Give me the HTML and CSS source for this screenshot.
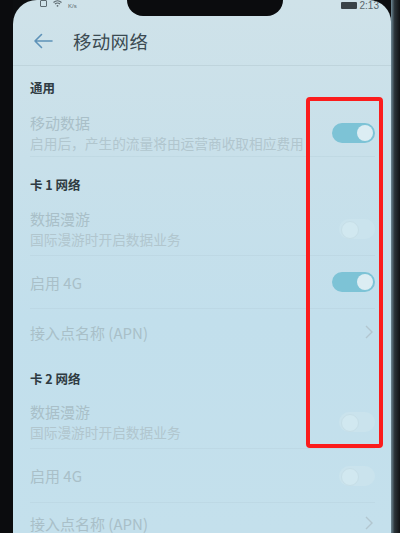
FILE: index.html
```html
<!DOCTYPE html>
<html lang="zh-CN">
<head>
<meta charset="utf-8">
<link rel="stylesheet" href="styles.css">
</head>
<body>
<div class="device">
  <div class="bezel-left"></div>
  <div class="screen">
    <div class="notch"></div>
    <div class="status">
      <div class="status-left">
        <span class="sim"></span>
        <svg class="wifi" width="9" height="7" viewBox="0 0 9 7"><path d="M0.5 2.5 Q4.5 -1 8.5 2.5 M2 4 Q4.5 2 7 4" stroke="#5d6a70" stroke-width="1.2" fill="none"/><circle cx="4.5" cy="5.8" r="0.9" fill="#5d6a70"/></svg>
        <span class="kps">K/s</span>
      </div>
      <div class="status-right">
        <span class="battery"></span>
        <span class="time">2:13</span>
      </div>
    </div>
    <div class="header">
      <svg class="back" width="20" height="16" viewBox="0 0 20 16"><path d="M19 8 H2 M8.5 1.5 L2 8 L8.5 14.5" stroke="#5e92b8" stroke-width="1.6" fill="none" stroke-linecap="round" stroke-linejoin="round"/></svg>
      <span class="title">移动网络</span>
    </div>
    <div class="divider-top"></div>

    <div class="section s1">通用</div>
    <div class="row r1 line">
      <div class="texts">
        <div class="t">移动数据</div>
        <div class="sub">启用后，产生的流量将由运营商收取相应费用</div>
      </div>
      <span class="toggle on"></span>
    </div>

    <div class="section s2">卡 1 网络</div>
    <div class="row r2 line">
      <div class="texts">
        <div class="t">数据漫游</div>
        <div class="sub">国际漫游时开启数据业务</div>
      </div>
      <span class="toggle off"></span>
    </div>
    <div class="row r3 line">
      <div class="texts"><div class="t">启用 4G</div></div>
      <span class="toggle on"></span>
    </div>
    <div class="row r4">
      <div class="texts"><div class="t">接入点名称 (APN)</div></div>
      <svg class="chev" width="8" height="14" viewBox="0 0 8 14"><path d="M1 1 L7 7 L1 13" stroke="#b2c6cf" stroke-width="1.4" fill="none"/></svg>
    </div>

    <div class="section s3">卡 2 网络</div>
    <div class="row r5 line">
      <div class="texts">
        <div class="t">数据漫游</div>
        <div class="sub">国际漫游时开启数据业务</div>
      </div>
      <span class="toggle off"></span>
    </div>
    <div class="row r6 line">
      <div class="texts"><div class="t">启用 4G</div></div>
      <span class="toggle off"></span>
    </div>
    <div class="row r7">
      <div class="texts"><div class="t">接入点名称 (APN)</div></div>
      <svg class="chev" width="8" height="14" viewBox="0 0 8 14"><path d="M1 1 L7 7 L1 13" stroke="#b2c6cf" stroke-width="1.4" fill="none"/></svg>
    </div>

    <div class="highlight"></div>
  </div>
  <div class="bezel-right"></div>
</div>
</body>
</html>
```
FILE: styles.css
```css
* { box-sizing: border-box; }
html, body { margin: 0; padding: 0; }
body {
  width: 400px;
  height: 533px;
  overflow: hidden;
  background: #0c0e10;
  font-family: "Noto Sans CJK SC", "Noto Sans", sans-serif;
}
.device {
  display: flex;
  height: 533px;
}
.bezel-left { width: 13px; background: #0b0c0e; }
.bezel-right {
  width: 9px;
  background: linear-gradient(90deg, #6d8895 0%, #2a3338 40%, #101214 100%);
}
.screen {
  position: relative;
  flex: 1;
  overflow: hidden;
  border-radius: 24px 22px 0 0;
  background: linear-gradient(180deg, #cfe2e9 0%, #c8e0ea 30%, #c2dfec 60%, #c4e0ec 100%);
  padding-left: 17px;
  padding-right: 16px;
}
.notch {
  position: absolute;
  left: 114px;
  top: -10px;
  width: 156px;
  height: 26px;
  background: #0b0c0e;
  border-radius: 0 0 16px 16px;
}
.status {
  height: 17px;
  display: flex;
  justify-content: space-between;
  align-items: flex-start;
  padding: 0 0 0 10px;
}
.status-left, .status-right { display: flex; align-items: center; gap: 6px; margin-top: -2px; }
.sim { width: 7px; height: 7px; border: 1.3px solid #5d6a70; border-radius: 1px; }
.kps { font-size: 6px; color: #5d6a70; font-family: "Liberation Sans", sans-serif; margin-top: 5px; }
.status-right { margin-right: -4px; gap: 3px; margin-top: 0; }
.battery { width: 16px; height: 7px; background: #3a4348; border-radius: 1px; }
.time { font-size: 10px; line-height: 11px; color: #5a666c; font-family: "Liberation Sans", sans-serif; }
.header {
  height: 48px;
  display: flex;
  align-items: center;
  padding-bottom: 1px;
}
.back { margin-left: 3px; margin-right: 20px; }
.title { font-size: 18.5px; color: #3b4a52; letter-spacing: 0.3px; }
.divider-top { height: 1px; margin: 0 -17px 0 -17px; background: #bfd4dc; }
.section {
  font-size: 12.5px;
  font-weight: bold;
  color: #2f3b42;
  line-height: 17px;
}
.s1 { height: 44px; padding-top: 13px; }
.s2 { height: 46px; padding-top: 19px; }
.s3 { height: 41px; padding-top: 15px; }
.row {
  display: flex;
  align-items: center;
  justify-content: space-between;
}
.line { border-bottom: 1px solid rgba(176, 202, 212, 0.3); }
.r1 { height: 47px; }
.r2 { height: 53px; }
.r3 { height: 53px; }
.r4 { height: 46px; }
.r5 { height: 53px; }
.r6 { height: 54px; }
.r7 { height: 40px; }
.texts { display: flex; flex-direction: column; gap: 2px; }
.t { font-size: 15px; color: #a9bfc8; line-height: 19px; }
.sub { font-size: 13.7px; color: #b1c6ce; line-height: 19px; white-space: nowrap; }
.toggle {
  position: relative;
  width: 43px;
  height: 20px;
  border-radius: 10px;
  flex-shrink: 0;
}
.toggle::after {
  content: "";
  position: absolute;
  top: 2px;
  width: 16px;
  height: 16px;
  border-radius: 50%;
}
.toggle.on { background: #7dc3d6; }
.toggle.on::after { right: 2px; background: #dcedf3; }
.toggle.off { background: #cae3ed; width: 36px; }
.toggle.off::after { left: 2px; background: #d1e8f0; border: 1px solid #c6dee7; }
.chev { margin-right: 2px; }
.highlight {
  position: absolute;
  left: 293px;
  top: 97px;
  width: 77px;
  height: 351px;
  border: 4px solid #fb1c1c;
  border-radius: 4px;
}
```
